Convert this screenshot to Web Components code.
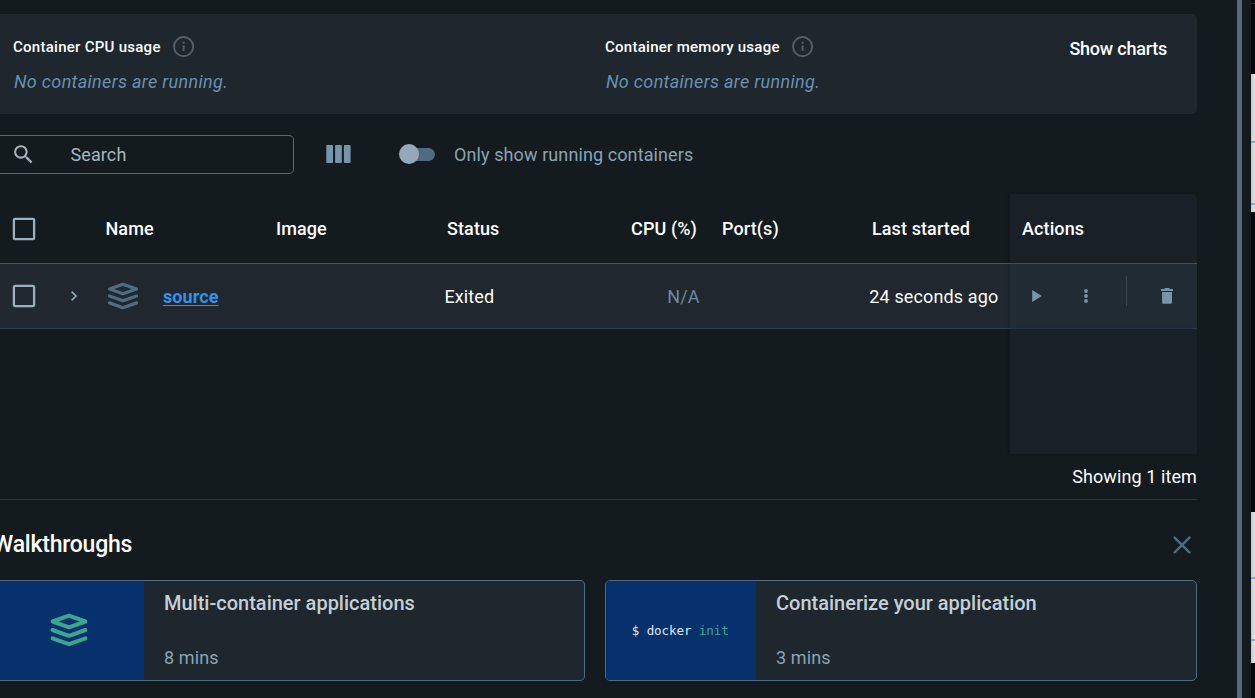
<!DOCTYPE html>
<html lang="en">
<head>
<meta charset="utf-8">
<title>Containers</title>
<style>
html,body{margin:0;height:100%;overflow:hidden;background:#141b1e}
body{font-family:Roboto,"Liberation Sans",sans-serif;font-size:18px;letter-spacing:.1px;color:#fff}
</style>
</head>
<body>
<dd-window></dd-window>
<script>
function define(name, html, setup){
  const t=document.createElement('template');
  t.innerHTML=html;
  customElements.define(name,class extends HTMLElement{
    constructor(){super();this.attachShadow({mode:'open'}).append(t.content.cloneNode(true));}
    connectedCallback(){if(setup)setup(this,this.shadowRoot);}
  });
}

const ICONS={
  info:'<svg viewBox="0 0 22 22" width="22" height="22" fill="none" stroke="#565f66" stroke-width="1.9"><circle cx="10.6" cy="10.6" r="9.6"/><path d="M10.6 9.4v5.6M10.6 5.8v2"/></svg>',
  search:'<svg viewBox="0 0 24 24" width="25" height="25" fill="#a5b5c0"><path d="M15.5 14h-.79l-.28-.27A6.47 6.47 0 0 0 16 9.5 6.5 6.5 0 1 0 9.5 16c1.61 0 3.09-.59 4.23-1.57l.27.28v.79l5 4.99L20.49 19l-4.99-5zm-6 0C7.01 14 5 11.99 5 9.5S7.01 5 9.5 5 14 7.01 14 9.5 11.99 14 9.5 14z"/></svg>',
  columns:'<svg viewBox="0 0 25 18" width="25" height="18" fill="#7794ab"><rect x=".3" width="6.7" height="18" rx=".8"/><rect x="9.1" width="6.7" height="18" rx=".8"/><rect x="17.9" width="6.7" height="18" rx=".8"/></svg>',
  box:'<svg viewBox="0 0 24 24" width="24" height="24" fill="none" stroke="#9ab0be" stroke-width="2.3"><rect x="1.9" y="1.9" width="20.2" height="20.2" rx="1.2"/></svg>',
  chevron:'<svg viewBox="0 0 8 12" width="8" height="12" fill="none" stroke="#8ba3b5" stroke-width="1.7"><path d="M1.6 1.7 6 6 1.6 10.3"/></svg>',
  stack:'<svg viewBox="0 0 38 34" width="100%" height="100%" fill="none" stroke="currentColor" stroke-width="4" stroke-linejoin="round" stroke-linecap="round"><path d="M2.6 8.5 19 2.7 35.4 8.5 19 14.3ZM2.6 17 19 22.8 35.4 17M2.6 25.4 19 31.2 35.4 25.4"/></svg>',
  play:'<svg viewBox="0 0 10 12" width="10" height="12" fill="#7794ab"><path d="M.2 0v12L9.8 6z"/></svg>',
  dots:'<svg viewBox="0 0 4 14" width="4" height="14" fill="#7794ab"><circle cx="2" cy="2" r="1.9"/><circle cx="2" cy="7" r="1.9"/><circle cx="2" cy="12" r="1.9"/></svg>',
  trash:'<svg viewBox="0 0 12 16" width="12" height="16" fill="#7794ab"><path d="M0 .9h3.2L4 0h4l.8.9H12v2H0zM1 4h10v10.2c0 1-.7 1.6-1.6 1.6H2.6C1.7 15.8 1 15.2 1 14.2z"/></svg>',
  close:'<svg viewBox="0 0 18 18" width="18" height="18" fill="none" stroke="#4f6c83" stroke-width="2.4" stroke-linecap="round"><path d="M1.6 1.6 16.4 16.4M16.4 1.6 1.6 16.4"/></svg>'
};
define('dd-icon','<style>:host{display:block;flex:none;line-height:0}svg{display:block}span{display:block;width:100%;height:100%}</style><span></span>',
  (el,r)=>{r.querySelector('span').innerHTML=ICONS[el.getAttribute('name')]||'';});

define('dd-metric',`<style>
:host{display:block}
.t{display:flex;align-items:center;height:22px;font-size:15px;font-weight:500;gap:12px;letter-spacing:.27px}
.m{margin:13px 0 0 1px;font-style:italic;color:#6c8fae;line-height:22px;letter-spacing:.34px}
</style><div class="t"><slot name="title"></slot><dd-icon name="info"></dd-icon></div><div class="m"><slot></slot></div>`);

define('dd-usage-panel',`<style>
:host{display:grid;grid-template-columns:592px 1fr auto;height:100px;box-sizing:border-box;padding:22px 30px 0 13px;background:#1d272d;border-radius:0 5px 5px 0}
b{font-weight:500;line-height:26px;white-space:nowrap;letter-spacing:-.23px}
</style>
<dd-metric><span slot="title">Container CPU usage</span>No containers are running.</dd-metric>
<dd-metric><span slot="title">Container memory usage</span>No containers are running.</dd-metric>
<b>Show charts</b>`);

define('dd-toolbar',`<style>
:host{display:flex;align-items:center;height:39px;margin-top:21px;color:#8ba3b5}
.s{display:flex;align-items:center;box-sizing:border-box;width:294px;height:39px;border:1px solid #4f6b80;border-left:0;border-radius:0 5px 5px 0;padding-left:10.5px;gap:35px;color:#a5b5c0}
.c{margin:0 0 1px 32px}
.sw{display:flex;align-items:center;width:29px;height:13px;border-radius:7px;background:#4f6b80;margin:0 19px 1px 55px}
.sw i{width:20px;height:20px;border-radius:50%;background:#94a9b8;margin-left:-7px;flex:none}
</style>
<div class="s"><dd-icon name="search"></dd-icon><span>Search</span></div>
<dd-icon class="c" name="columns"></dd-icon><div class="sw"><i></i></div><span>Only show running containers</span>`);

define('dd-table',`<style>
:host{display:grid;grid-template-columns:105px 171px 170px 251px 25px 148px 140px 187px;grid-template-rows:70px 65px 125px;margin-top:20px;white-space:nowrap}
.r{display:grid;grid-template-columns:subgrid;grid-column:1/-1;align-items:center}
.h{font-weight:500;border-bottom:1px solid #4f5557}
.b{background:#20272e;border-bottom:1px solid #2b3f4e}
.f{display:flex;align-items:center}
.a{height:100%;display:flex;align-items:center;box-sizing:border-box;background:#1a2028;padding-left:12px;box-shadow:-2px 0 3px #0002}
.h .a{border-radius:0 5px 0 0}
.b .a{background:#202b33;padding-left:22px}
.e .a{height:125px}
.h,.b{box-sizing:border-box}
.b>span,.link{padding-top:1px}
.link{color:#3192f0;font-weight:700;text-decoration:underline;text-underline-offset:2px;text-decoration-thickness:1px}
.name{margin-left:.5px}
.cpu{grid-column:4;justify-self:end}
.ports{grid-column:6}
.status{grid-column:4;grid-row:1}
.h .status{margin-left:1px}
.cpu{grid-row:1}
.b .n{grid-column:1/3}
.b .status{margin-left:-1.5px}
.b .cpu{color:#6c8aa3;margin-right:-2.5px}
.b .when{grid-column:7;margin-left:-.7px;letter-spacing:.13px}
.h .when{margin-left:2px}
.check{margin-left:12px}
.go{margin-left:34px}
.stack{margin-left:29px;width:32px;height:28px;color:#4f6c83}
.more{margin-left:42px}
.sep{width:1px;height:30px;background:#35444f;margin:-10px 34px 0 38px}
</style>
<div class="r h"><dd-icon class="check" name="box"></dd-icon><span class="name">Name</span><span>Image</span><span class="status">Status</span><span class="cpu">CPU (%)</span><span class="ports">Port(s)</span><span class="when">Last started</span><div class="a">Actions</div></div>
<div class="r b"><div class="f n"><dd-icon class="check" name="box"></dd-icon><dd-icon class="go" name="chevron"></dd-icon><dd-icon class="stack" name="stack"></dd-icon><span class="link" style="margin-left:24px">source</span></div>
<span class="status">Exited</span><span class="cpu">N/A</span><span class="when">24 seconds ago</span>
<div class="a"><dd-icon name="play"></dd-icon><dd-icon class="more" name="dots"></dd-icon><i class="sep"></i><dd-icon name="trash"></dd-icon></div></div>
<div class="r e"><div class="a" style="grid-column:8"></div></div>`);

define('dd-card',`<style>
:host{display:flex;box-sizing:border-box;height:101px;border:1px solid #4f6b80;border-radius:5px;overflow:hidden;background:#1d272d}
.p{display:flex;align-items:center;justify-content:center;background:#06316d;width:var(--pw,150px);flex:none}
.x{padding:9px 0 0 20px;display:flex;flex-direction:column;gap:29px;color:#8ba3b5}
.t{font-size:20px;font-weight:500;color:#c4cfd8;line-height:27px;letter-spacing:0}
.m{line-height:24px}
</style><div class="p"><slot name="art"></slot></div><div class="x"><span class="t"><slot name="title"></slot></span><span class="m"><slot></slot></span></div>`);

define('dd-walkthroughs',`<style>
:host{display:block;border-top:1px solid #2d3539}
header{display:flex;align-items:center;justify-content:space-between;height:80px;box-sizing:border-box;padding:9px 6px 0 0}
h2{margin:0 0 0 -7px;font-size:23px;font-weight:500;line-height:30px;letter-spacing:-.23px}
.g{display:grid;grid-template-columns:585px 592px;gap:20px}
.one{border-left:0;border-radius:0 5px 5px 0;--pw:144px}
.one dd-icon{width:38px;height:34px;margin:0 7px 2px 0;color:#3ba58f}
code{font:12.5px "DejaVu Sans Mono","Liberation Mono",monospace;letter-spacing:-.06px;color:#e0e6ec;white-space:pre;padding:0 1.5px 0 0}
code em{font-style:normal;color:#3ba58f}
</style>
<header><h2>Walkthroughs</h2><dd-icon name="close"></dd-icon></header>
<div class="g"><dd-card class="one"><dd-icon slot="art" name="stack"></dd-icon><span slot="title">Multi-container applications</span>8 mins</dd-card>
<dd-card><code slot="art">$ docker <em>init</em></code><span slot="title">Containerize your application</span>3 mins</dd-card></div>`);

define('dd-strip',`<style>
:host{display:flex;flex-direction:column;width:4px;background:#07090c}
i{display:block;background:linear-gradient(90deg,#c9c9c9,#e2e2e2)}
.l{background:#86a9cf;height:2px}
</style>
<i style="height:1px;margin-top:3px;background:#22262a"></i>
<i style="height:67px;margin-top:70px"></i><i class="l"></i><i style="height:60px"></i><i class="l"></i><i style="height:7px"></i>
<i style="height:65px;margin-top:300px"></i><i class="l"></i><i style="height:60px"></i><i class="l"></i><i style="height:22px"></i>`);

define('dd-window',`<style>
:host{display:grid;grid-template-columns:1197px 1fr 5px 9px 4px;height:698px;overflow:hidden}
main{padding-top:14px}
.bar{background:#4f6b80;grid-column:3}
.foot{display:flex;justify-content:flex-end;align-items:center;height:45px}
dd-strip{grid-column:5}
</style>
<main><dd-usage-panel></dd-usage-panel><dd-toolbar></dd-toolbar><dd-table></dd-table><div class="foot"><span>Showing 1 item</span></div><dd-walkthroughs></dd-walkthroughs></main>
<div class="bar"></div><dd-strip></dd-strip>`);
</script>
</body>
</html>
